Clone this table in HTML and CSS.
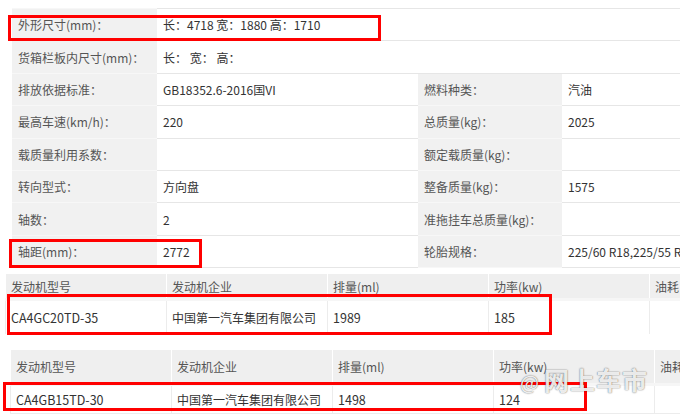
FILE: index.html
```html
<!DOCTYPE html>
<html lang="zh-CN">
<head>
    <meta charset="UTF-8">
    <title>车辆参数</title>
    <link rel="stylesheet" href="styles.css">
</head>
<body>
    <div class="page">
        <table class="spec">
            <colgroup>
                <col class="c-label"><col class="c-value"><col class="c-label2"><col class="c-value2">
            </colgroup>
            <tr><td class="label">外形尺寸(mm)：</td><td colspan="3">长：4718 宽：1880 高：1710</td></tr>
            <tr><td class="label">货箱栏板内尺寸(mm)：</td><td colspan="3">长： 宽： 高：</td></tr>
            <tr><td class="label">排放依据标准：</td><td>GB18352.6-2016国VI</td><td class="label">燃料种类：</td><td>汽油</td></tr>
            <tr><td class="label">最高车速(km/h)：</td><td>220</td><td class="label">总质量(kg)：</td><td>2025</td></tr>
            <tr><td class="label">载质量利用系数：</td><td></td><td class="label">额定载质量(kg)：</td><td></td></tr>
            <tr><td class="label">转向型式：</td><td>方向盘</td><td class="label">整备质量(kg)：</td><td>1575</td></tr>
            <tr><td class="label">轴数：</td><td>2</td><td class="label">准拖挂车总质量(kg)：</td><td></td></tr>
            <tr><td class="label">轴距(mm)：</td><td>2772</td><td class="label">轮胎规格：</td><td>225/60 R18,225/55 R19</td></tr>
        </table>

        <table class="engine engine-a">
            <colgroup><col><col><col><col><col></colgroup>
            <tr class="head"><td>发动机型号</td><td>发动机企业</td><td>排量(ml)</td><td>功率(kw)</td><td>油耗</td></tr>
            <tr><td class="code">CA4GC20TD-35</td><td>中国第一汽车集团有限公司</td><td class="code">1989</td><td class="code">185</td><td></td></tr>
        </table>

        <table class="engine engine-b">
            <colgroup><col><col><col><col><col></colgroup>
            <tr class="head"><td>发动机型号</td><td>发动机企业</td><td>排量(ml)</td><td>功率(kw)</td><td>油耗</td></tr>
            <tr><td class="code">CA4GB15TD-30</td><td>中国第一汽车集团有限公司</td><td class="code">1498</td><td class="code">124</td><td></td></tr>
        </table>

        <!-- red annotation boxes -->
        <div class="mark mark-1"></div>
        <div class="mark mark-2"></div>
        <div class="mark mark-3"></div>
        <div class="mark mark-4"></div>

        <div class="watermark"><span class="at">@</span>网上车市</div>
    </div>
</body>
</html>
```

FILE: styles.css
```css
body {
    margin: 0;
    padding: 0;
    background: #fff;
    font-family: "Noto Sans CJK SC", "Noto Sans", sans-serif;
    font-size: 12px;
    color: #333;
}
.page {
    position: relative;
    width: 680px;
    height: 417px;
    overflow: hidden;
}
table {
    border-collapse: collapse;
    table-layout: fixed;
}
td {
    padding: 0 6px;
    white-space: nowrap;
    overflow: hidden;
}
.spec {
    margin: 8px 0 0 12px;
    width: 690px;
}
.c-label { width: 145px; }
.c-value { width: 261px; }
.c-label2 { width: 144px; }
.c-value2 { width: 140px; }
.spec td {
    height: 31.4px;
    border-top: 1px solid #e6e6e6;
    border-bottom: 1px solid #e6e6e6;
}
.spec td.label {
    background-color: #f1f1f1;
    color: #555;
    border-top-color: #f7f7f7;
    border-bottom-color: #f7f7f7;
}
.engine {
    width: 805px;
}
.engine col {
    width: 161px;
}
.engine td {
    padding: 0 5px;
    border-left: 1px solid #fff;
}
.engine .head td {
    background-color: #efefef;
    color: #555;
}
.engine tr:not(.head) td {
    border-left: 1px solid #ececec;
    border-top: 3px solid #f6f6f6;
}
.engine td.code {
    font-size: 12.5px;
}
.engine-a {
    margin: 6px 0 0 5px;
}
.engine-a .head td { height: 24px; }
.engine-a tr:not(.head) td { height: 33px; }
.engine-b {
    margin: 16px 0 0 10px;
}
.engine-b .head td { height: 33px; }
.engine-b tr:not(.head) td { height: 27px; border-bottom: 1px solid #ececec; }

.mark {
    position: absolute;
    border: 3px solid #f00;
    box-sizing: border-box;
}
.mark-1 { left: 8px; top: 15px; width: 373px; height: 26px; }
.mark-2 { left: 9px; top: 239px; width: 193px; height: 29px; }
.mark-3 { left: 7px; top: 294px; width: 545px; height: 41px; }
.mark-4 { left: 3px; top: 382px; width: 584px; height: 29px; }

.watermark {
    position: absolute;
    left: 520px;
    top: 361px;
    font-size: 25px;
    font-weight: bold;
    color: rgba(255, 255, 255, 0.9);
    text-shadow: 0 0 1px rgba(0, 0, 0, 0.5), 0 0 2px rgba(0, 0, 0, 0.3);
    letter-spacing: 1px;
}
.watermark .at {
    font-size: 20px;
    font-weight: normal;
    margin-right: 4px;
}
```
